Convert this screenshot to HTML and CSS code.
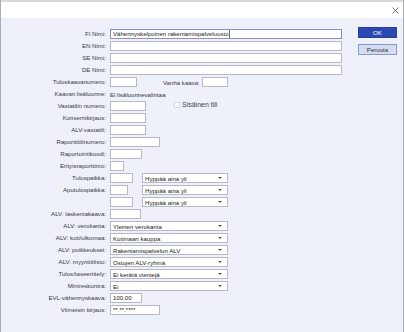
FILE: index.html
```
<!DOCTYPE html>
<html lang="fi">
<head>
<meta charset="utf-8">
<title>Tili</title>
<link rel="stylesheet" href="styles.css">
</head>
<body>
<div class="window">
  <div class="topstrip"></div>
  <div class="titlebar">
    <svg class="close" width="7" height="7" viewBox="0 0 7 7"><path d="M0.5 0.5L6.5 6.5M6.5 0.5L0.5 6.5" stroke="#555" stroke-width="0.8" fill="none"/></svg>
  </div>
  <div class="body">
    <div class="form">
      <div class="lbl">FI Nimi:</div>
      <div class="fld"><div class="inp focus w-full"><span class="sel">Vähennyskelpoinen rakentamispalveluosto</span></div></div>
      <div class="lbl">EN Nimi:</div>
      <div class="fld"><div class="inp w-full"></div></div>
      <div class="lbl">SE Nimi:</div>
      <div class="fld"><div class="inp w-full"></div></div>
      <div class="lbl">DE Nimi:</div>
      <div class="fld"><div class="inp w-full"></div></div>

      <div class="lbl">Tuloskaavanumero:</div>
      <div class="fld"><div class="inp w27"></div><span class="sublbl">Vanha kaava:</span><div class="inp w26"></div></div>

      <div class="lbl">Kaavan lisäluonne:</div>
      <div class="fld"><span class="val">Ei lisäluonnevalintaa</span></div>

      <div class="lbl">Vastatilin numero:</div>
      <div class="fld"><div class="inp w36"></div><span class="check"><span class="box"></span>Sisäinen tili</span></div>
      <div class="lbl">Konsernikirjaus:</div>
      <div class="fld"><div class="inp w36"></div></div>
      <div class="lbl">ALV-vastatili:</div>
      <div class="fld"><div class="inp w36"></div></div>
      <div class="lbl">Raporttitilinumero:</div>
      <div class="fld"><div class="inp w50"></div></div>
      <div class="lbl">Raportointikoodi:</div>
      <div class="fld"><div class="inp w32"></div></div>
      <div class="lbl">Erityisraporttinro:</div>
      <div class="fld"><div class="inp w14"></div></div>

      <div class="lbl">Tulospaikka:</div>
      <div class="fld"><div class="slot"><div class="inp w23"></div></div><div class="select w86"><span>Hyppää aina yli</span><i class="arrow"></i></div></div>
      <div class="lbl">Aputulospaikka:</div>
      <div class="fld"><div class="slot"><div class="inp w18"></div></div><div class="select w86"><span>Hyppää aina yli</span><i class="arrow"></i></div></div>
      <div class="lbl"></div>
      <div class="fld"><div class="slot"><div class="inp w23"></div></div><div class="select w86"><span>Hyppää aina yli</span><i class="arrow"></i></div></div>

      <div class="lbl">ALV: laskentakaava:</div>
      <div class="fld"><div class="inp w31"></div></div>
      <div class="lbl">ALV: verokanta:</div>
      <div class="fld"><div class="select w118"><span>Yleinen verokanta</span><i class="arrow"></i></div></div>
      <div class="lbl">ALV: koti/ulkomaa:</div>
      <div class="fld"><div class="select w118"><span>Kotimaan kauppa</span><i class="arrow"></i></div></div>
      <div class="lbl">ALV: poikkeukset:</div>
      <div class="fld"><div class="select w118"><span>Rakentamispalvelun ALV</span><i class="arrow"></i></div></div>
      <div class="lbl">ALV: myyntitilisto:</div>
      <div class="fld"><div class="select w118"><span>Ostojen ALV-ryhmä</span><i class="arrow"></i></div></div>
      <div class="lbl">Tulos/taseerittely:</div>
      <div class="fld"><div class="select w118"><span>Ei kerätä vientejä</span><i class="arrow"></i></div></div>
      <div class="lbl">Minireskontra:</div>
      <div class="fld"><div class="select w118"><span>Ei</span><i class="arrow"></i></div></div>
      <div class="lbl">EVL-vähennyskaava:</div>
      <div class="fld"><div class="inp w32">100.00</div></div>
      <div class="lbl">Viimeisin kirjaus:</div>
      <div class="fld"><div class="inp w50">**.**.****</div></div>
    </div>
    <div class="buttons">
      <div class="btn ok">OK</div>
      <div class="btn cancel">Peruuta</div>
    </div>
  </div>
</div>
</body>
</html>
```
FILE: styles.css
```
* { box-sizing: border-box; }
html, body { margin: 0; padding: 0; }
body {
  width: 405px;
  height: 332px;
  overflow: hidden;
  background: #ffffff;
  font-family: "Liberation Sans", Arial, sans-serif;
  font-size: 6.1px;
  color: #333;
}
.window {
  width: 404px;
  height: 332px;
  border-left: 1px solid #a9adb5;
  border-right: 1px solid #a9adb5;
  display: flex;
  flex-direction: column;
  background: #eef1f9;
}
.topstrip {
  height: 2px;
  background: #d9dadd;
}
.titlebar {
  height: 16px;
  background: #ffffff;
  display: flex;
  justify-content: flex-end;
  align-items: center;
  padding-right: 4px;
}
.close { display: block; }
.body {
  flex: 1;
  display: flex;
  align-items: flex-start;
  padding-top: 11px;
}
.form {
  width: 341px;
  display: grid;
  grid-template-columns: 105px 1fr;
  grid-auto-rows: 10px;
  column-gap: 4px;
  row-gap: 2px;
}
.lbl {
  text-align: right;
  line-height: 10px;
  white-space: nowrap;
  color: #3a3a3a;
}
.fld {
  display: flex;
  align-items: center;
  height: 10px;
}
.inp {
  height: 10px;
  background: #fff;
  border: 1px solid #b6bac6;
  padding: 0 2px;
  line-height: 8px;
  white-space: nowrap;
  overflow: hidden;
  color: #222;
}
.inp.focus { border-color: #8793bd; padding-left: 1px; }
.sel {
  display: inline-block;
  height: 8px;
  line-height: 8px;
  padding: 0 0 0 1px;
  border-right: 1px solid #6b7390;
}
.w-full { width: 232px; }
.w14 { width: 14px; }
.w18 { width: 18px; }
.w23 { width: 23px; }
.w26 { width: 26px; }
.w27 { width: 27px; }
.w31 { width: 31px; }
.w32 { width: 32px; }
.w36 { width: 36px; }
.w50 { width: 50px; }
.w86 { width: 86px; }
.w118 { width: 118px; }
.sublbl {
  margin-left: 26px;
  margin-right: 2px;
  color: #3a3a3a;
}
.val { color: #333; }
.check {
  display: flex;
  align-items: center;
  margin-left: 28px;
  align-self: flex-start;
  margin-top: 0px;
  line-height: 8px;
  font-size: 7px;
  color: #444;
}
.box {
  width: 6px;
  height: 6px;
  background: #fff;
  border: 1px solid #d4d7de;
  margin-right: 2px;
}
.slot { width: 32px; display: flex; }
.select {
  height: 10px;
  background: #fff;
  border: 1px solid #b6bac6;
  padding: 0 5px 0 2px;
  display: flex;
  align-items: center;
  justify-content: space-between;
  white-space: nowrap;
  color: #222;
}
.arrow {
  width: 0;
  height: 0;
  border-left: 2px solid transparent;
  border-right: 2px solid transparent;
  border-top: 2.5px solid #555;
}
.buttons {
  margin-left: 16px;
  margin-top: -2px;
  width: 39px;
  display: flex;
  flex-direction: column;
  gap: 6px;
}
.btn {
  height: 11px;
  display: flex;
  align-items: center;
  justify-content: center;
  font-size: 6.1px;
}
.ok {
  background: #2c48b0;
  color: #fff;
  border: 1px solid #2a3f95;
}
.cancel {
  background: #d3dcf0;
  border: 1px solid #8a9acb;
  color: #333;
}
```
